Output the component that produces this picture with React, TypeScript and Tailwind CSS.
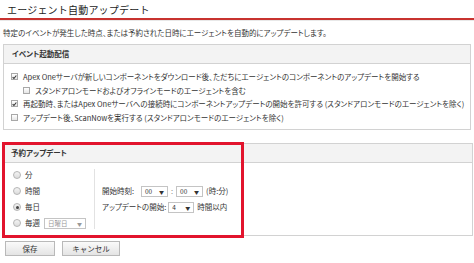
import React from "react";

const font = "font-['Noto_Sans_CJK_JP','Noto_Sans',sans-serif]";

const Check = ({ on }: { on?: boolean }) => (
  <span className="inline-flex items-center justify-center w-[7px] h-[7px] border border-[#a8a8a8] bg-gradient-to-b from-white to-[#e6e6e6] shrink-0">
    {on && (
      <svg width="6" height="6" viewBox="0 0 6 6">
        <path d="M0.8 3.2 L2.3 4.8 L5.2 1.2" stroke="#333" strokeWidth="1.3" fill="none" />
      </svg>
    )}
  </span>
);

const Radio = ({ on }: { on?: boolean }) => (
  <span className="inline-flex items-center justify-center w-[8px] h-[8px] rounded-full border border-[#b5b5b5] bg-gradient-to-b from-[#f4f4f4] to-[#dcdcdc] shrink-0">
    {on && <span className="w-[3px] h-[3px] rounded-full bg-[#444]" />}
  </span>
);

const Select = ({ value, w, disabled }: { value: string; w: string; disabled?: boolean }) => (
  <span
    className={`inline-flex items-center justify-between h-[11px] px-[3px] border border-[#c4c4c4] bg-white text-[6.5px] leading-none shrink-0 ${w} ${
      disabled ? "text-[#999]" : "text-[#333]"
    }`}
  >
    <span>{value}</span>
    <span className="text-[5px]">▼</span>
  </span>
);

const rows = [
  { on: true, indent: false, text: "Apex Oneサーバが新しいコンポーネントをダウンロード後、ただちにエージェントのコンポーネントのアップデートを開始する" },
  { on: false, indent: true, text: "スタンドアロンモードおよびオフラインモードのエージェントを含む" },
  { on: true, indent: false, text: "再起動時、またはApex Oneサーバへの接続時にコンポーネントアップデートの開始を許可する (スタンドアロンモードのエージェントを除く)" },
  { on: false, indent: false, text: "アップデート後、ScanNowを実行する (スタンドアロンモードのエージェントを除く)" },
];

const App = () => {
  return (
    <div className={`relative w-[474px] h-[263px] bg-white overflow-hidden text-[#333] ${font}`}>
      <div className="h-[20px] pt-[3px] pl-[7px] border-b-2 border-[#c8322f]">
        <div className="text-[10px] leading-[14px] text-[#222] tracking-[0.2px]">エージェント自動アップデート</div>
      </div>
      <div className="h-px bg-[#e8e8e8]" />

      <div className="mt-[7px] pl-[3px] text-[7.5px] leading-[10px] [font-feature-settings:'palt']">
        特定のイベントが発生した時点、または予約された日時にエージェントを自動的にアップデートします。
      </div>

      <div className="mt-[6px] ml-[3px] mr-[3px] border border-[#d2d2d2]">
        <div className="h-[19px] flex items-center pl-[8px] bg-[#f3f3f3] border-b border-[#d2d2d2] text-[7.5px] font-bold [font-feature-settings:'palt']">
          イベント起動配信
        </div>
        <div className="pt-[6px] pb-[5px]">
          {rows.map((r, i) => (
            <div
              key={i}
              className={`h-[13.5px] flex items-center gap-[5px] text-[7.5px] [font-feature-settings:'palt'] whitespace-nowrap ${
                r.indent ? "pl-[19px]" : "pl-[7px]"
              }`}
            >
              <Check on={r.on} />
              <span>{r.text}</span>
            </div>
          ))}
        </div>
      </div>

      <div className="mt-[13px] ml-[3px] mr-px border border-[#d2d2d2]">
        <div className="h-[19px] flex items-center pl-[7px] bg-[#f3f3f3] border-b border-[#d2d2d2] text-[7.5px] font-bold [font-feature-settings:'palt']">
          予約アップデート
        </div>
        <div className="h-[72px] flex items-center">
          <div className="w-[91px] h-[60px] flex flex-col justify-between pl-[9px] text-[7.5px] border-r border-[#e2e2e2] [font-feature-settings:'palt']">
            <div className="flex items-center gap-[4px] h-[12px]">
              <Radio />
              <span>分</span>
            </div>
            <div className="flex items-center gap-[4px] h-[12px]">
              <Radio />
              <span>時間</span>
            </div>
            <div className="flex items-center gap-[4px] h-[12px]">
              <Radio on />
              <span>毎日</span>
            </div>
            <div className="flex items-center gap-[4px] h-[12px]">
              <Radio />
              <span>毎週</span>
              <Select value="日曜日" w="w-[42px]" disabled />
            </div>
          </div>
          <div className="flex flex-col gap-[4px] pl-[7px] text-[7.5px] [font-feature-settings:'palt'] whitespace-nowrap">
            <div className="flex items-center h-[12px]">
              <span className="w-[39px]">開始時刻:</span>
              <Select value="00" w="w-[27px]" />
              <span className="px-[3px] text-[#888]">:</span>
              <Select value="00" w="w-[27px]" />
              <span className="ml-[3px]">(時:分)</span>
            </div>
            <div className="flex items-center h-[12px]">
              <span className="mr-[2px]">アップデートの開始:</span>
              <Select value="4" w="w-[26px]" />
              <span className="ml-[3px]">時間以内</span>
            </div>
          </div>
        </div>
      </div>

      <div className="mt-[5px] ml-[5px] flex gap-[7px] text-[7.5px]">
        <button className="w-[50px] h-[15px] border border-[#b9b9b9] bg-gradient-to-b from-[#fafafa] to-[#e4e4e4] text-[#333]">
          保存
        </button>
        <button className="w-[58px] h-[15px] border border-[#b9b9b9] bg-gradient-to-b from-[#fafafa] to-[#e4e4e4] text-[#333]">
          キャンセル
        </button>
      </div>

      <div className="absolute left-[2px] top-[142px] w-[242px] h-[96px] border-[3px] border-[#e2142d] pointer-events-none" />
    </div>
  );
};

export default App;
